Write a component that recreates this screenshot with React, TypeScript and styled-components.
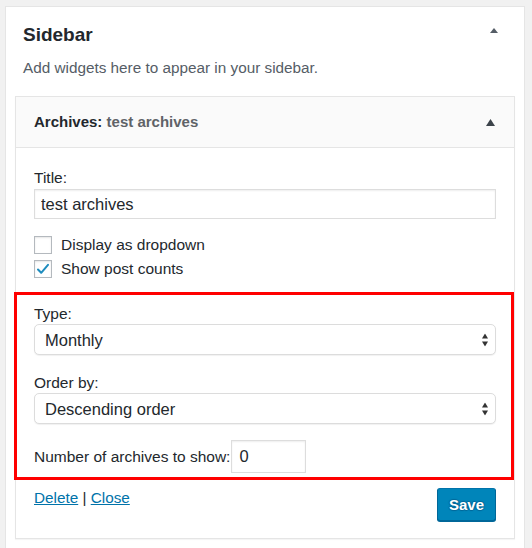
import React from "react";
import styled, { createGlobalStyle } from "styled-components";

const Global = createGlobalStyle`
  html, body { margin: 0; padding: 0; background: #f1f1f1; }
  body { font-family: "Liberation Sans", Arial, Helvetica, sans-serif; color: #23282d; }
`;

const Page = styled.div`
  height: 548px;
  box-sizing: border-box;
  padding: 6px 0 0 5px;
  overflow: hidden;
`;

const Panel = styled.section`
  width: 520px;
  min-height: 600px;
  box-sizing: border-box;
  background: #fff;
  border: 1px solid #e5e5e5;
  padding: 0 9px 40px;
`;

const PanelHeader = styled.div`
  display: flex;
  justify-content: space-between;
  align-items: flex-start;
  padding: 16px 17px 0 8px;
`;

const PanelTitle = styled.h2`
  margin: 0;
  font-size: 19px;
  line-height: 24px;
  font-weight: 700;
  color: #23282d;
`;

const ArrowIcon = styled.svg<{ $mt: number }>`
  display: block;
  margin-top: ${(p) => p.$mt}px;
  flex: none;
`;

const Description = styled.p`
  margin: 11px 0 0;
  padding-left: 8px;
  font-size: 15.3px;
  line-height: 20px;
  color: #555d66;
`;

const Widget = styled.div`
  margin-top: 18px;
  border: 1px solid #e5e5e5;
  background: #fff;
  box-shadow: 0 1px 1px rgba(0, 0, 0, 0.04);
`;

const WidgetHeader = styled.div`
  height: 50px;
  display: flex;
  align-items: center;
  justify-content: space-between;
  padding: 0 19px 0 18px;
  background: #fafafa;
  border-bottom: 1px solid #e5e5e5;
`;

const WidgetTitle = styled.h3`
  margin: 0;
  font-size: 15px;
  line-height: 20px;
  font-weight: 700;
  color: #23282d;
`;

const InWidgetTitle = styled.span`
  color: #5f6368;
`;

const WidgetBody = styled.div`
  padding: 20px 18px 17px;
`;

const FieldLabel = styled.label<{ $mt?: number }>`
  display: block;
  margin-top: ${(p) => p.$mt ?? 0}px;
  font-size: 15.5px;
  line-height: 20px;
  color: #23282d;
`;

const TextInput = styled.input`
  display: block;
  width: 100%;
  height: 30px;
  box-sizing: border-box;
  margin: 1px 0 0;
  padding: 0 6px;
  border: 1px solid #ddd;
  box-shadow: inset 0 1px 2px rgba(0, 0, 0, 0.07);
  font-family: inherit;
  font-size: 16.5px;
  color: #23282d;
  background: #fff;
  outline: none;
`;

const CheckGroup = styled.div`
  margin-top: 14px;
`;

const CheckRow = styled.label`
  display: flex;
  align-items: center;
  gap: 9px;
  height: 24px;
  font-size: 15.5px;
  line-height: 20px;
  color: #23282d;
`;

const CheckBox = styled.span`
  width: 18px;
  height: 18px;
  box-sizing: border-box;
  border: 1px solid #b4b9be;
  background: #fff;
  box-shadow: inset 0 1px 2px rgba(0, 0, 0, 0.1);
  display: flex;
  align-items: center;
  justify-content: center;
  flex: none;
`;

const Highlight = styled.div`
  margin: 11px -18px 0 -20px;
  border: 3px solid #ff0000;
  padding: 9px 15px 4px 17px;
`;

const SelectWrap = styled.div`
  position: relative;
`;

const Select = styled.select`
  display: block;
  width: 100%;
  height: 31px;
  box-sizing: border-box;
  appearance: none;
  -webkit-appearance: none;
  border: 1px solid #dcdcdc;
  border-radius: 5px;
  background: #fff;
  box-shadow: 0 1px 1px rgba(0, 0, 0, 0.06);
  padding: 0 10px;
  font-family: inherit;
  font-size: 16.5px;
  color: #23282d;
  outline: none;
`;

const SelectArrows = styled.svg`
  position: absolute;
  right: 8px;
  top: 50%;
  transform: translateY(-50%);
  pointer-events: none;
`;

const NumberRow = styled.div`
  display: flex;
  align-items: center;
  margin-top: 16px;
  font-size: 15.5px;
  line-height: 20px;
  color: #23282d;
`;

const NumberInput = styled.input`
  width: 75px;
  height: 33px;
  box-sizing: border-box;
  margin-left: 1px;
  padding: 0 7px;
  border: 1px solid #ddd;
  box-shadow: inset 0 1px 2px rgba(0, 0, 0, 0.07);
  font-family: inherit;
  font-size: 16.5px;
  color: #23282d;
  background: #fff;
  outline: none;
`;

const Actions = styled.div`
  display: flex;
  justify-content: space-between;
  align-items: flex-start;
  margin-top: 8px;
`;

const Links = styled.div`
  margin-top: 0;
  font-size: 15.3px;
  line-height: 20px;
  color: #23282d;
`;

const Link = styled.a`
  color: #0073aa;
  text-decoration: underline;
`;

const SaveButton = styled.button`
  width: 59px;
  height: 33px;
  padding: 0;
  border: 1px solid #0073aa;
  border-color: #0073aa #006799 #006799;
  border-radius: 3px;
  background: #0085ba;
  box-shadow: 0 1px 0 #006799;
  color: #fff;
  font-family: inherit;
  font-size: 15px;
  font-weight: 700;
  text-shadow: 0 -1px 1px #006799, 1px 0 1px #006799, 0 1px 1px #006799, -1px 0 1px #006799;
  cursor: pointer;
`;

const UpArrow = ({ w, h, mt, color }: { w: number; h: number; mt: number; color: string }) => (
  <ArrowIcon $mt={mt} width={w} height={h} viewBox={`0 0 ${w} ${h}`}>
    <polygon points={`0,${h} ${w / 2},0 ${w},${h}`} fill={color} />
  </ArrowIcon>
);

const Arrows = () => (
  <SelectArrows width="6" height="13" viewBox="0 0 6 13">
    <polygon points="0,5 3,0 6,5" fill="#333" />
    <polygon points="0,8 6,8 3,13" fill="#333" />
  </SelectArrows>
);

export default function App() {
  return (
    <>
      <Global />
      <Page>
        <Panel>
          <PanelHeader>
            <PanelTitle>Sidebar</PanelTitle>
            <UpArrow w={8} h={5} mt={5} color="#555d66" />
          </PanelHeader>
          <Description>Add widgets here to appear in your sidebar.</Description>
          <Widget>
            <WidgetHeader>
              <WidgetTitle>
                Archives: <InWidgetTitle>test archives</InWidgetTitle>
              </WidgetTitle>
              <UpArrow w={9} h={7} mt={0} color="#3c434a" />
            </WidgetHeader>
            <WidgetBody>
              <FieldLabel htmlFor="title">Title:</FieldLabel>
              <TextInput id="title" defaultValue="test archives" />
              <CheckGroup>
                <CheckRow>
                  <CheckBox />
                  Display as dropdown
                </CheckRow>
                <CheckRow>
                  <CheckBox>
                    <svg width="14" height="12" viewBox="0 0 14 12">
                      <path d="M2 6.5 L5.2 9.8 L12 1.8" fill="none" stroke="#1e8cbe" strokeWidth="2" strokeLinecap="round" strokeLinejoin="round" />
                    </svg>
                  </CheckBox>
                  Show post counts
                </CheckRow>
              </CheckGroup>
              <Highlight>
                <FieldLabel htmlFor="type">Type:</FieldLabel>
                <SelectWrap>
                  <Select id="type" defaultValue="monthly">
                    <option value="monthly">Monthly</option>
                  </Select>
                  <Arrows />
                </SelectWrap>
                <FieldLabel htmlFor="order" $mt={18}>Order by:</FieldLabel>
                <SelectWrap>
                  <Select id="order" defaultValue="desc">
                    <option value="desc">Descending order</option>
                  </Select>
                  <Arrows />
                </SelectWrap>
                <NumberRow>
                  <label htmlFor="num">Number of archives to show:</label>
                  <NumberInput id="num" defaultValue="0" />
                </NumberRow>
              </Highlight>
              <Actions>
                <Links>
                  <Link href="#">Delete</Link> | <Link href="#">Close</Link>
                </Links>
                <SaveButton>Save</SaveButton>
              </Actions>
            </WidgetBody>
          </Widget>
        </Panel>
      </Page>
    </>
  );
}
